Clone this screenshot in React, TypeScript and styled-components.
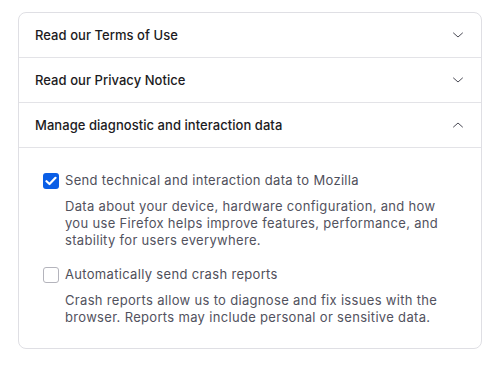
import React, { useState } from "react";
import styled, { createGlobalStyle } from "styled-components";

const Global = createGlobalStyle`
  html, body { margin: 0; padding: 0; background: #ffffff; }
  body { font-family: Inter, "Noto Sans", "Liberation Sans", sans-serif; -webkit-font-smoothing: antialiased; }
`;

const Page = styled.div`
  padding: 12px 0 0 18px;
`;

const Card = styled.div`
  width: 462px;
  border: 1px solid #dfdfe4;
  border-radius: 8px;
  overflow: hidden;
  background: #fff;
`;

const Section = styled.div<{ $last?: boolean }>`
  border-bottom: ${(p) => (p.$last ? "none" : "1px solid #e3e3e7")};
`;

const Header = styled.button`
  display: flex;
  align-items: center;
  justify-content: space-between;
  width: 100%;
  height: 44px;
  padding: 0 18px 0 16px;
  border: none;
  background: transparent;
  font-family: inherit;
  font-size: 13px;
  font-weight: 500;
  letter-spacing: 0.05px;
  color: #1c1b22;
  cursor: pointer;
  text-align: left;
`;

const Panel = styled.div`
  border-top: 1px solid #e3e3e7;
  padding: 24px 24px 22px 24px;
  display: flex;
  flex-direction: column;
  gap: 17px;
`;

const Option = styled.div`
  display: flex;
  flex-direction: column;
  gap: 9px;
`;

const LabelRow = styled.label`
  display: flex;
  align-items: center;
  gap: 6px;
  font-size: 13px;
  line-height: 17px;
  letter-spacing: 0.32px;
  color: #4f4f5a;
  cursor: pointer;
`;

const Box = styled.span<{ $checked: boolean }>`
  width: 16px;
  height: 16px;
  box-sizing: border-box;
  border-radius: 3px;
  display: inline-flex;
  align-items: center;
  justify-content: center;
  flex-shrink: 0;
  background: ${(p) => (p.$checked ? "#0a5ee6" : "#ffffff")};
  border: ${(p) => (p.$checked ? "none" : "1px solid #b4b4bc")};
`;

const Description = styled.p`
  margin: 0 0 0 22px;
  max-width: 386px;
  font-size: 13px;
  line-height: 17px;
  letter-spacing: 0.32px;
  color: #52525e;
`;

const Chevron = ({ up }: { up?: boolean }) => (
  <svg width="10" height="6" viewBox="0 0 10 6" fill="none">
    <path
      d={up ? "M0.5 5 L5 1 L9.5 5" : "M0.5 1 L5 5 L9.5 1"}
      stroke="#4a4a55"
      strokeWidth="1"
      strokeLinecap="round"
      strokeLinejoin="round"
    />
  </svg>
);

const Check = () => (
  <svg width="12" height="10" viewBox="0 0 12 10" fill="none">
    <path d="M1.5 5.2 L4.5 8 L10.5 1.8" stroke="#fff" strokeWidth="2.2" strokeLinecap="round" strokeLinejoin="round" />
  </svg>
);

const CheckOption = ({ checked, label, desc, onToggle }: { checked: boolean; label: string; desc: string; onToggle: () => void }) => (
  <Option>
    <LabelRow onClick={onToggle}>
      <Box $checked={checked}>{checked && <Check />}</Box>
      {label}
    </LabelRow>
    <Description>{desc}</Description>
  </Option>
);

export default function App() {
  const [telemetry, setTelemetry] = useState(true);
  const [crash, setCrash] = useState(false);
  return (
    <>
      <Global />
      <Page>
        <Card>
          <Section>
            <Header>
              Read our Terms of Use
              <Chevron />
            </Header>
          </Section>
          <Section>
            <Header>
              Read our Privacy Notice
              <Chevron />
            </Header>
          </Section>
          <Section $last>
            <Header>
              Manage diagnostic and interaction data
              <Chevron up />
            </Header>
            <Panel>
              <CheckOption
                checked={telemetry}
                onToggle={() => setTelemetry(!telemetry)}
                label="Send technical and interaction data to Mozilla"
                desc="Data about your device, hardware configuration, and how you use Firefox helps improve features, performance, and stability for users everywhere."
              />
              <CheckOption
                checked={crash}
                onToggle={() => setCrash(!crash)}
                label="Automatically send crash reports"
                desc="Crash reports allow us to diagnose and fix issues with the browser. Reports may include personal or sensitive data."
              />
            </Panel>
          </Section>
        </Card>
      </Page>
    </>
  );
}
